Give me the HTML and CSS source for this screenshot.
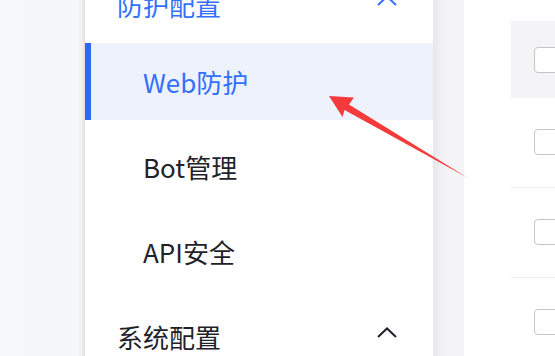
FILE: index.html
```html
<!DOCTYPE html>
<html lang="zh">
<head>
<meta charset="utf-8">
<link rel="stylesheet" href="styles.css">
</head>
<body>
<div class="page">
  <div class="left-bg"></div>
  <nav class="sidebar">
    <div class="menu">
      <div class="group-title active-group">
        <span>防护配置</span>
        <svg class="chev" width="20" height="11" viewBox="0 0 20 11"><path d="M1 10 L10 1.5 L19 10" fill="none" stroke="currentColor" stroke-width="2"/></svg>
      </div>
      <div class="item active">Web防护</div>
      <div class="item">Bot管理</div>
      <div class="item">API安全</div>
      <div class="group-title">
        <span>系统配置</span>
        <svg class="chev" width="20" height="11" viewBox="0 0 20 11"><path d="M1 10 L10 1.5 L19 10" fill="none" stroke="currentColor" stroke-width="2"/></svg>
      </div>
    </div>
  </nav>
  <div class="gutter"></div>
  <main class="content">
    <div class="table">
      <div class="thead"><span class="checkbox"></span></div>
      <div class="row"><span class="checkbox"></span></div>
      <div class="row"><span class="checkbox"></span></div>
      <div class="row last"><span class="checkbox"></span></div>
    </div>
  </main>
  <svg class="arrow" width="555" height="356" viewBox="0 0 555 356">
    <polygon points="329,96 354,97.5 349,104.5 468,178 344.5,110 342.5,117" fill="#f43b3b"/>
  </svg>
</div>
</body>
</html>
```

FILE: styles.css
```css
* { box-sizing: border-box; }
html, body { margin: 0; padding: 0; }
body {
  width: 555px;
  height: 356px;
  overflow: hidden;
  background: #f7f8fa;
  font-family: "Noto Sans CJK SC", "Noto Sans", sans-serif;
}
.page {
  position: relative;
  display: flex;
  width: 555px;
  height: 356px;
  overflow: hidden;
}
.left-bg {
  width: 85px;
  flex: none;
  background: linear-gradient(to right, #f7f8fa 0, #f6f7f9 78px, #ececef 83px, #d9d9dc 85px);
}
.sidebar {
  width: 348px;
  flex: none;
  background: #fff;
  overflow: hidden;
}
.menu {
  display: flex;
  flex-direction: column;
  margin-top: -34px;
}
.group-title {
  height: 77px;
  display: flex;
  align-items: center;
  justify-content: space-between;
  padding: 0 36px 0 32px;
  font-size: 26px;
  color: #1f2329;
}
.group-title + .item { margin-top: 0; }
.item + .group-title { margin-top: 8px; }
.group-title .chev { margin-top: -9px; }
.active-group { color: #3370ff; }
.item {
  height: 77px;
  margin-top: 8px;
  display: flex;
  align-items: center;
  padding-left: 58px;
  font-size: 26px;
  color: #1f2329;
}
.item.active {
  background: #edf2fc;
  color: #3370ff;
  border-left: 6px solid #2b68f5;
  padding-left: 52px;
}
.gutter {
  width: 31px;
  flex: none;
  background: linear-gradient(to right, #e7e7ea 0, #efeff2 6px, #f4f4f6 14px, #f4f4f6 100%);
}
.content {
  flex: 1;
  background: #fff;
  padding: 21px 0 0 47px;
}
.table {
  display: flex;
  flex-direction: column;
}
.thead {
  height: 77px;
  background: #f4f4f6;
  display: flex;
  align-items: center;
  padding-left: 23px;
}
.row {
  height: 90px;
  border-bottom: 1px solid #ebecef;
  display: flex;
  align-items: center;
  padding-left: 23px;
  padding-bottom: 1px;
}
.checkbox {
  width: 26px;
  height: 26px;
  flex: none;
  border: 1.5px solid #c5c6ca;
  border-radius: 4px;
  background: #fff;
  margin-right: -10px;
}
.arrow {
  position: absolute;
  left: 0;
  top: 0;
  pointer-events: none;
}
```
